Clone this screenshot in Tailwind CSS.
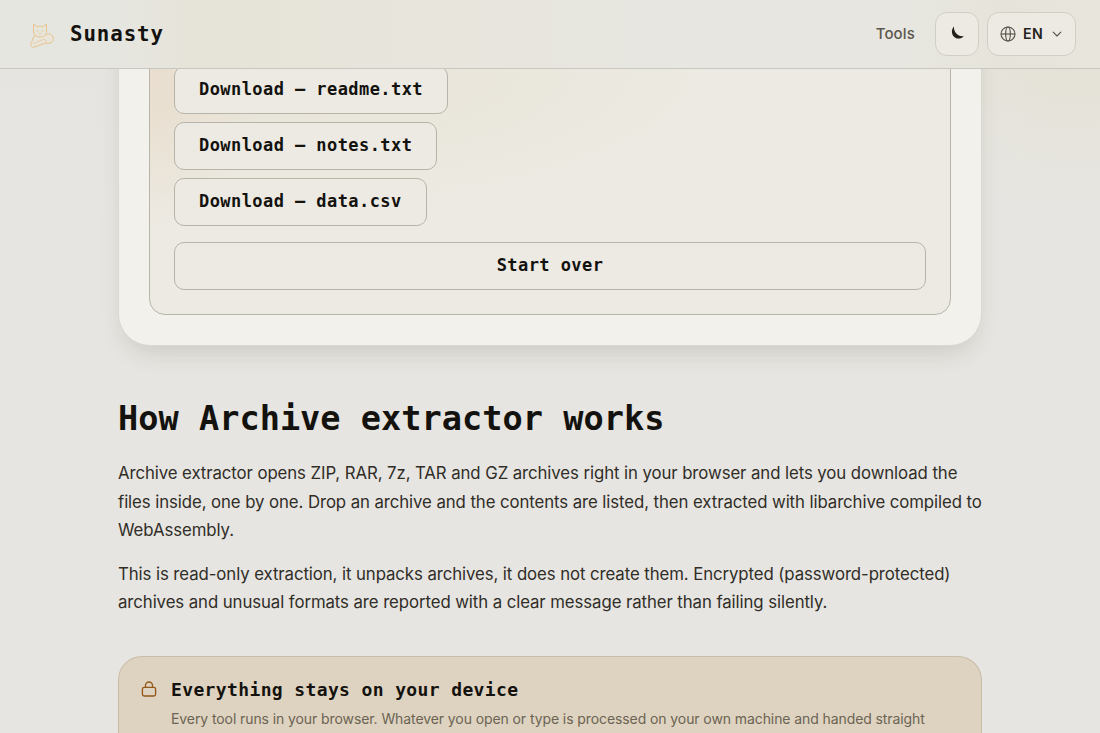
<!DOCTYPE html>
<html lang="en">
<head>
<meta charset="utf-8">
<title>Sunasty</title>
<script src="https://cdn.jsdelivr.net/npm/@tailwindcss/browser@4"></script>
</head>
<body class="h-[733px] overflow-hidden bg-[#e6e5e1] bg-[linear-gradient(to_bottom,transparent_60px,#e6e5e1_210px),linear-gradient(to_right,#e5e4e0_78%,#e5e2d6_96%)] font-['Inter',sans-serif] text-[#14120e] flex flex-col">
<header class="relative z-10 flex h-[69px] shrink-0 items-center border-b border-[#c8c7c1] bg-[#e7e6e0] bg-[linear-gradient(to_right,#e6e6e1_10%,#e6e3d8_18%,#e7e5dc_40%,#e7e6e0_60%,#e7e6e0_82%,#e6e4da_91%,#e7e5dc_100%)] px-6 pb-px">
  <div class="flex items-center gap-[10px]">
    <svg class="h-9 w-9" viewBox="0 0 36 36" fill="none" stroke="#e7c38e" stroke-width="1" stroke-linecap="round" stroke-linejoin="round">
      <path fill="#e8e5db" d="M10.500 19.500C8.500 22 9 24 7.500 26.500c-2 3-.5 5.500 3 4.500l11-4c2 .5 5.500.5 7-1.500 1.800-2.500.3-7-3-7.500-1.500-.2-2.500.3-3.500 1"/>
      <path fill="#e8e5db" d="M9.500 16V8l3.300 2.800c2-.7 4-.7 6 0L22.500 8v8.500c0 2.500-2.500 4.500-6.500 4.500s-6.500-2.500-6.500-5Z"/>
      <path stroke-width=".7" d="M12.800 15h1.400M18 15h1.400M14.800 17.500l1.300.6 1.300-.6M9.500 27.500c3-.5 6-3.500 10.500-4 2-.2 3 1.500 1.500 3.500"/>
    </svg>
    <span class="mt-px font-['DejaVu_Sans_Mono',monospace] text-[20.800px] font-bold leading-6 tracking-[.9px]">Sunasty</span>
  </div>
  <nav class="ml-auto flex items-center">
    <a class="mr-[20px] mt-px text-[15px] font-medium tracking-[.15px] text-[#5c574d]">Tools</a>
    <button class="mr-2 flex h-11 w-11 items-center justify-center rounded-xl border border-[#d0cec7] bg-[#edeae3]">
      <svg class="-mt-0.5 ml-0.5 h-4 w-4" viewBox="0 0 16 16" fill="#22201b"><path d="M3.900 1.500C1 5 1.500 9 4 11.700c2.900 2.700 7 2.500 10-.7-3.200.6-5.900-.4-7.700-2.400C4.600 6.600 3.800 4.300 3.900 1.500Z"/></svg>
    </button>
    <button class="flex h-11 w-[89px] items-center rounded-xl border border-[#d0cec7] bg-[#edeae3] pl-3">
      <svg class="h-4 w-4" viewBox="0 0 16 16" fill="none" stroke="#57534a" stroke-width="1.150"><circle cx="8" cy="8" r="7"/><ellipse cx="8" cy="8" rx="2.300" ry="7"/><path d="M1 8h14"/></svg>
      <span class="ml-[7px] text-[14.200px] font-semibold tracking-[.4px] text-[#26231e]">EN</span>
      <svg class="ml-2 h-3 w-3" viewBox="0 0 12 12" fill="none" stroke="#57534a" stroke-width="1.100" stroke-linecap="round" stroke-linejoin="round"><path d="m2.200 4.200 3.800 3.800 3.800-3.800"/></svg>
    </button>
  </nav>
</header>
<main class="mx-auto w-[864px]">
  <section class="-mt-[61px] rounded-[32px] border border-[#d9d8d1] bg-[#f2f1ec] px-[30px] pb-[30px] shadow-[0_12px_24px_-8px_rgba(60,55,30,0.17)]">
    <div class="flex flex-col items-start gap-2 rounded-b-2xl border border-[#b7b4aa] bg-[#edeae3] bg-[radial-gradient(ellipse_110px_150px_at_0_70px,#e9decf,transparent),radial-gradient(ellipse_440px_140px_at_130px_60px,#e7e3d5,transparent)] px-6 pb-6 pt-14">
      <button class="flex h-12 items-center rounded-[10px] border border-[#b7b4aa] bg-[#edeae3] px-6 font-['DejaVu_Sans_Mono',monospace] text-[17px] font-bold tracking-[.43px]">Download — readme.txt</button>
      <button class="flex h-12 items-center rounded-[10px] border border-[#b7b4aa] bg-[#edeae3] px-6 font-['DejaVu_Sans_Mono',monospace] text-[17px] font-bold tracking-[.43px]">Download — notes.txt</button>
      <button class="flex h-12 items-center rounded-[10px] border border-[#b7b4aa] bg-[#edeae3] px-6 font-['DejaVu_Sans_Mono',monospace] text-[17px] font-bold tracking-[.43px]">Download — data.csv</button>
      <button class="mt-2 flex h-12 w-full items-center justify-center rounded-[10px] border border-[#b7b4aa] bg-[#edeae3] font-['DejaVu_Sans_Mono',monospace] text-[17px] font-bold tracking-[.43px]">Start over</button>
    </div>
  </section>
  <h2 class="mt-[52px] whitespace-nowrap font-['DejaVu_Sans_Mono',monospace] text-[33.600px] font-bold leading-[42px] tracking-[.02px]">How Archive extractor works</h2>
  <p class="mt-[19px] whitespace-nowrap text-[16.800px] leading-[28.500px] tracking-[-.085px] text-[#302d27]">Archive extractor opens ZIP, RAR, 7z, TAR and GZ archives right in your browser and lets you download the<br>files inside, one by one. Drop an archive and the contents are listed, then extracted with libarchive compiled to<br>WebAssembly.</p>
  <p class="mt-[15px] whitespace-nowrap text-[16.800px] leading-[28.500px] tracking-[-.085px] text-[#302d27]">This is read-only extraction, it unpacks archives, it does not create them. Encrypted (password-protected)<br>archives and unusual formats are reported with a clear message rather than failing silently.</p>
  <aside class="mt-[39px] flex h-[77px] rounded-t-3xl border border-b-0 border-[#c9bda7] bg-[#ded3c0] pl-[22px] pt-[21px]">
    <svg class="mt-[3px] h-4 w-4 shrink-0" viewBox="0 0 16 16" fill="none" stroke="#94591a" stroke-width="1.350" stroke-linejoin="round"><rect x="1.400" y="6.400" width="13.200" height="8.600" rx="1.800"/><path d="M4.500 6.400V4.500a3.500 3.500 0 0 1 7 0v1.900"/></svg>
    <div class="ml-[14px]">
      <h3 class="whitespace-nowrap font-['DejaVu_Sans_Mono',monospace] text-[18px] font-bold leading-6 tracking-[.37px]">Everything stays on your device</h3>
      <p class="mt-[5px] whitespace-nowrap text-[14px] leading-6 tracking-[-.09px] text-[#6b6353]">Every tool runs in your browser. Whatever you open or type is processed on your own machine and handed straight</p>
    </div>
  </aside>
</main>
</body>
</html>
